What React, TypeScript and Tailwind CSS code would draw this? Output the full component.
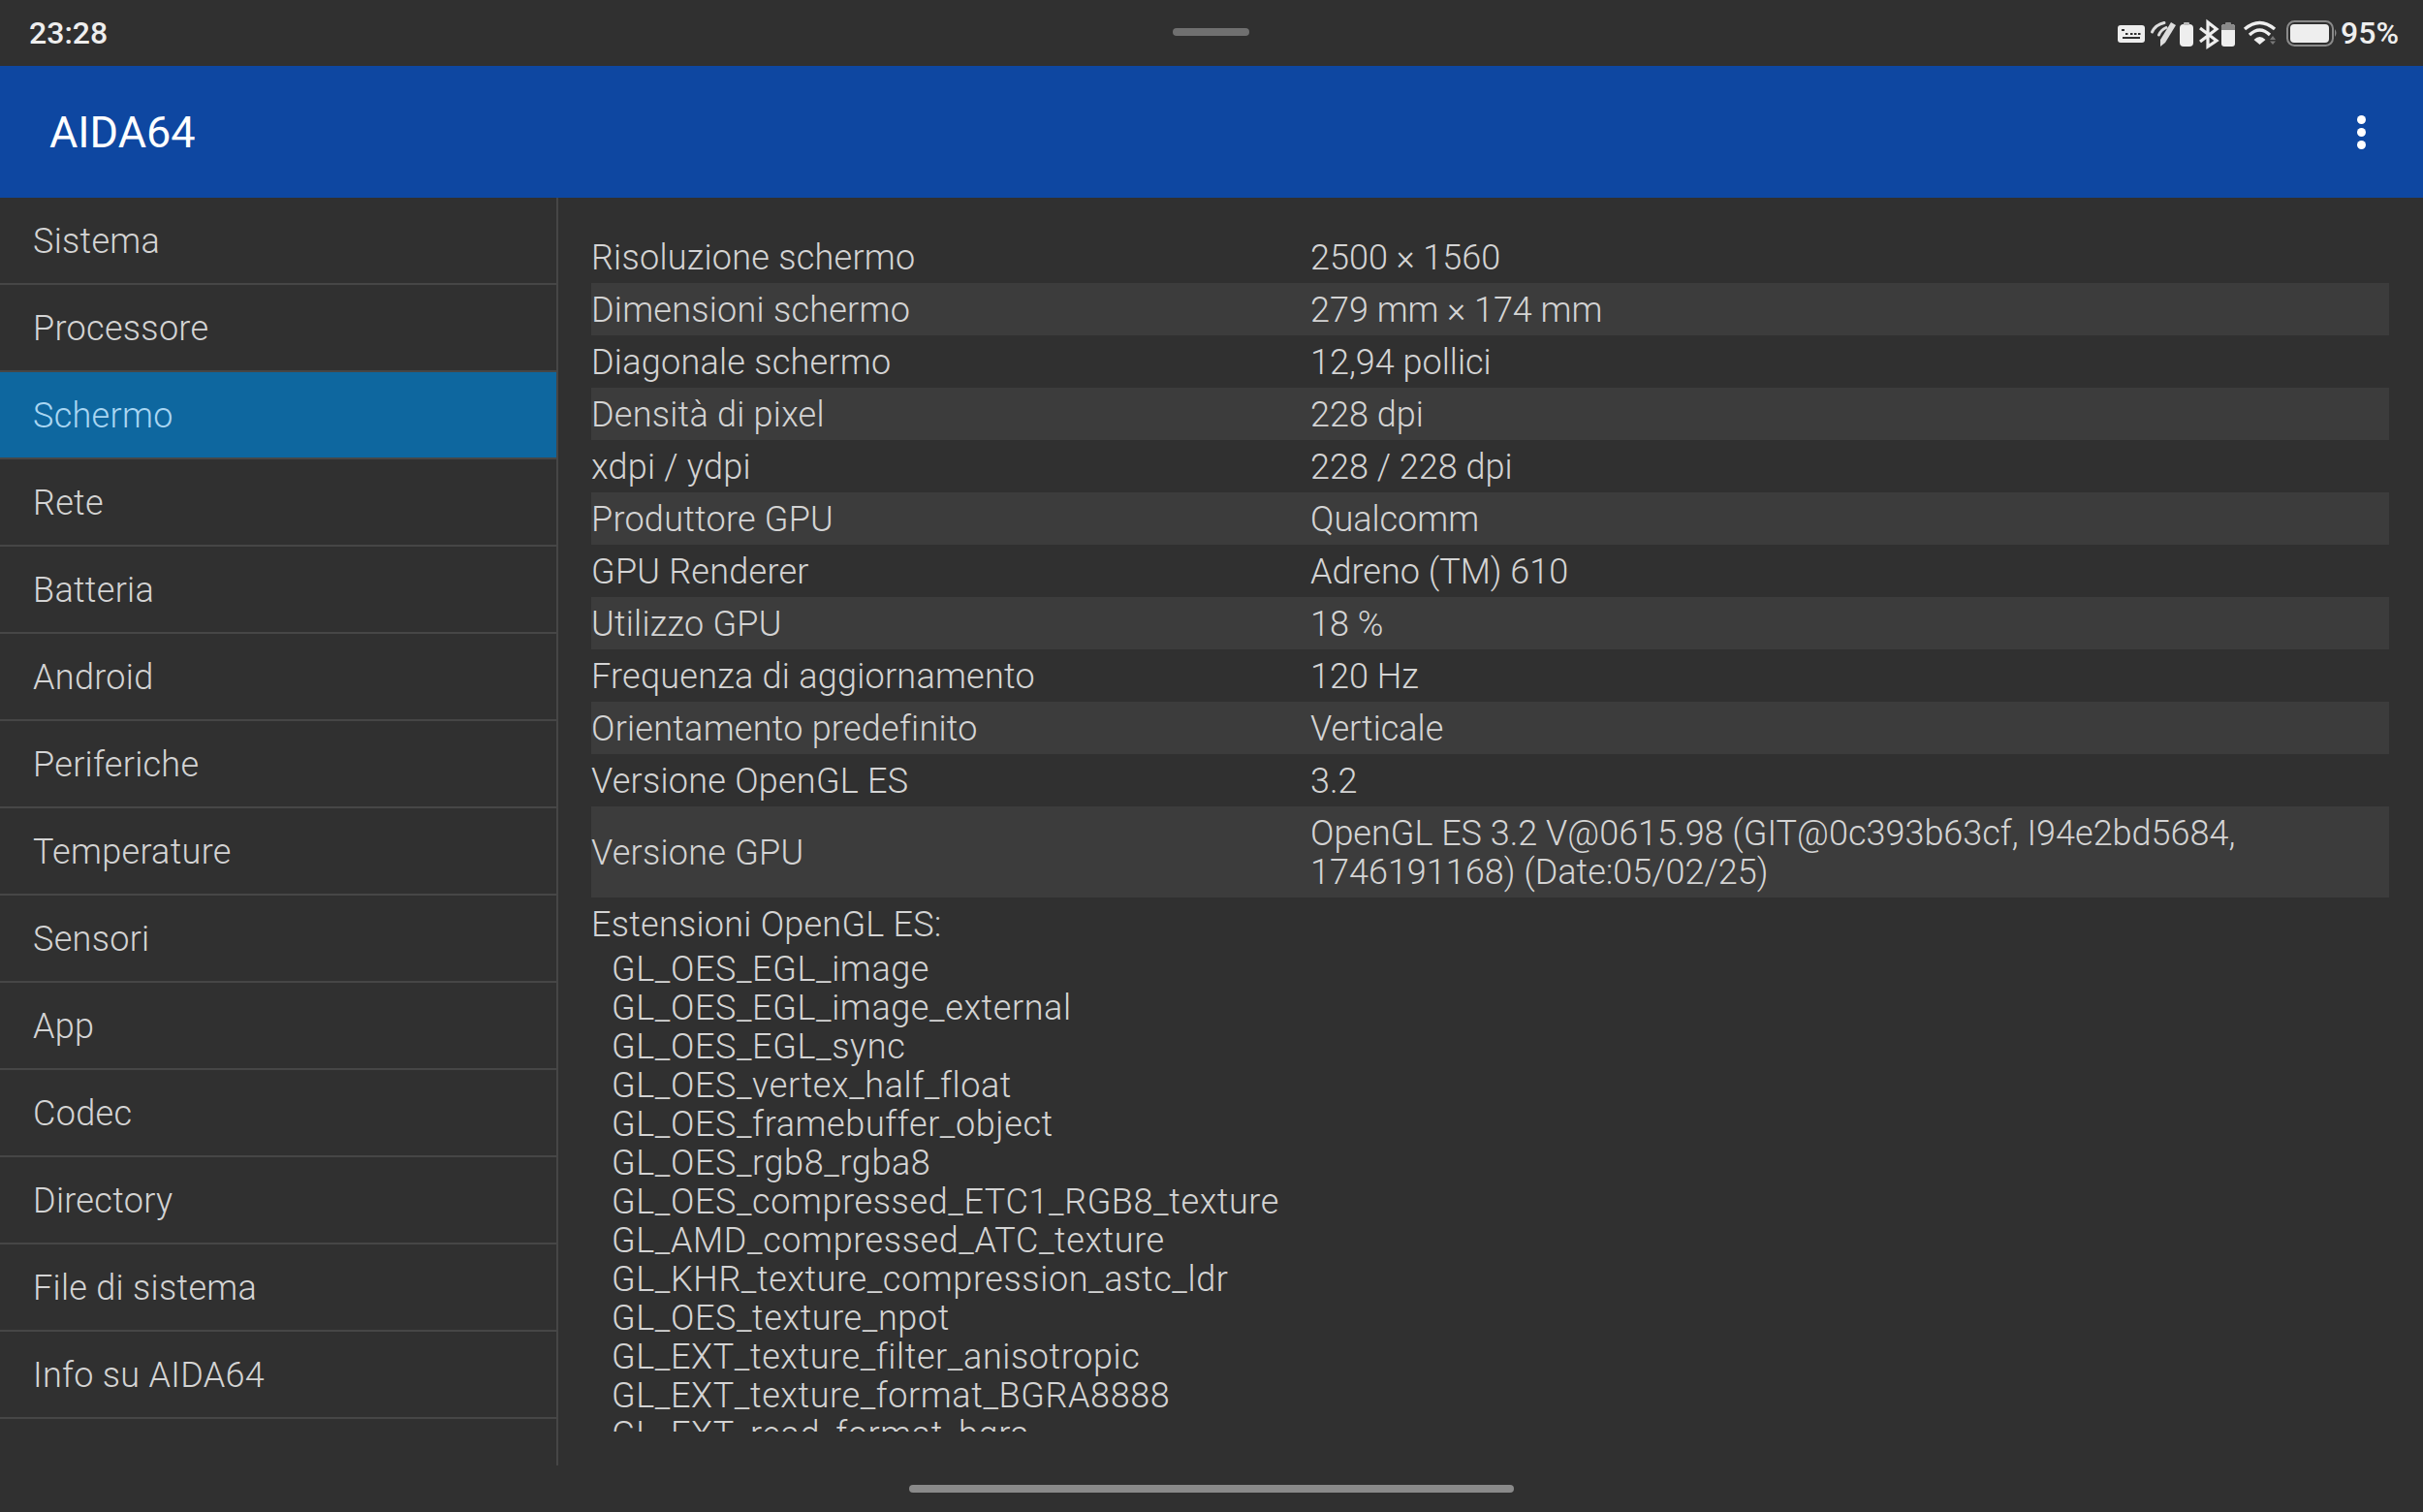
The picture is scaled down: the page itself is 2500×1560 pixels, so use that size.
const menu = [
  "Sistema", "Processore", "Schermo", "Rete", "Batteria", "Android", "Periferiche",
  "Temperature", "Sensori", "App", "Codec", "Directory", "File di sistema", "Info su AIDA64",
];

const rows = [
  ["Risoluzione schermo", "2500 × 1560"],
  ["Dimensioni schermo", "279 mm × 174 mm"],
  ["Diagonale schermo", "12,94 pollici"],
  ["Densità di pixel", "228 dpi"],
  ["xdpi / ydpi", "228 / 228 dpi"],
  ["Produttore GPU", "Qualcomm"],
  ["GPU Renderer", "Adreno (TM) 610"],
  ["Utilizzo GPU", "18 %"],
  ["Frequenza di aggiornamento", "120 Hz"],
  ["Orientamento predefinito", "Verticale"],
  ["Versione OpenGL ES", "3.2"],
  ["Versione GPU", "OpenGL ES 3.2 V@0615.98 (GIT@0c393b63cf, I94e2bd5684, 1746191168) (Date:05/02/25)"],
];

const extensions = [
  "GL_OES_EGL_image", "GL_OES_EGL_image_external", "GL_OES_EGL_sync", "GL_OES_vertex_half_float",
  "GL_OES_framebuffer_object", "GL_OES_rgb8_rgba8", "GL_OES_compressed_ETC1_RGB8_texture",
  "GL_AMD_compressed_ATC_texture", "GL_KHR_texture_compression_astc_ldr", "GL_OES_texture_npot",
  "GL_EXT_texture_filter_anisotropic", "GL_EXT_texture_format_BGRA8888", "GL_EXT_read_format_bgra",
  "GL_OES_texture_3D",
];

function StatusIcons() {
  return (
    <svg width="228" height="36" viewBox="0 0 228 36" fill="#eeeeee">
      {/* keyboard */}
      <rect x="1" y="10" width="28" height="18" rx="3" />
      <g fill="#303030">
        <rect x="5" y="14" width="3" height="2" />
        <rect x="9" y="18" width="2.5" height="2" />
        <rect x="14" y="18" width="2.5" height="2" />
        <rect x="18" y="18" width="2.5" height="2" />
        <rect x="22" y="18" width="2.5" height="2" />
        <rect x="6" y="22" width="18" height="2" />
      </g>
      {/* stylus */}
      <path d="M45 32 L45 25 L56 7 L61 10 L50 28 Z" fill="#dddddd" />
      <path d="M36.5 17 Q40 9.500 49 7.500 M43.500 20 Q45.500 15 51 12.500" stroke="#dddddd" strokeWidth="3" fill="none" strokeLinecap="round" />
      {/* small battery */}
      <rect x="65" y="9" width="14" height="23" rx="4" />
      <rect x="69" y="7" width="6" height="3" rx="1" fill="#bbbbbb" />
      {/* bluetooth */}
      <path d="M86 13 L103 26 L94 32 V7 L103 14 L86 27" stroke="#eeeeee" strokeWidth="3.2" fill="none" />
      {/* second battery */}
      <rect x="108" y="9" width="14" height="23" rx="3" />
      <path d="M108 15 V12 Q108 9 111 9 H119 Q122 9 122 12 V15 Z" fill="#8a8a8a" />
      <rect x="112" y="7" width="6" height="3" rx="1" fill="#8a8a8a" />
      {/* wifi */}
      <path d="M132 14 Q147.500 1 163 14 M137 20 Q147.500 10 158 20" stroke="#eeeeee" strokeWidth="3.4" fill="none" />
      <path d="M141.500 25 Q147.500 19 153.500 25 L147.500 30 Z" />
      <path d="M161 21 L164 25 H158 Z M161 30 L164 26.500 H158 Z" fill="#777777" />
      {/* main battery */}
      <rect x="176" y="6" width="47" height="25" rx="7.500" fill="none" stroke="#8a8a8a" strokeWidth="2" />
      <rect x="179" y="9" width="40" height="19" rx="4" />
      <path d="M225 14 Q228 18 225 22 Z" fill="#8a8a8a" />
    </svg>
  );
}

export default function App() {
  return (
    <div className="flex h-[1560px] w-[2500px] flex-col overflow-hidden bg-[#303030] font-['Roboto',sans-serif] text-[36px] font-light text-[#d4d4d4]">
      {/* status bar */}
      <div className="relative flex h-[68px] shrink-0 items-center justify-between pl-[30px] pr-[25px] text-[#eeeeee]">
        <span className="text-[32px] font-medium">23:28</span>
        <div className="absolute left-[1210px] top-[29px] h-[8px] w-[79px] rounded-full bg-[#707070]" />
        <div className="flex items-center gap-[3px]">
          <StatusIcons />
          <span className="text-[32px] font-medium">95%</span>
        </div>
      </div>

      {/* app bar */}
      <div className="flex h-[136px] shrink-0 items-center justify-between bg-[#0e47a1] pl-[51px] pr-[59px] text-white">
        <span className="pt-[2px] text-[45px] font-normal">AIDA64</span>
        <div className="flex flex-col gap-[4px]">
          <span className="size-[9px] rounded-full bg-white" />
          <span className="size-[9px] rounded-full bg-white" />
          <span className="size-[9px] rounded-full bg-white" />
        </div>
      </div>

      <div className="flex h-[1308px] shrink-0">
        <div className="w-[576px] shrink-0 border-r-2 border-[#464646] tracking-[0.3px]">
          {menu.map((item) => (
            <div
              key={item}
              className={
                item === "Schermo"
                  ? "flex h-[90px] items-center border-b-2 border-[#464646] bg-[#0e679f] pl-[34px] pt-[2px] text-[#a9d6f2]"
                  : "flex h-[90px] items-center border-b-2 border-[#464646] pl-[34px] pt-[2px]"
              }
            >
              {item}
            </div>
          ))}
        </div>

        <div className="min-w-0 flex-1 pb-[35px] pl-[34px] pr-[35px] pt-[34px]">
          <div className="h-full overflow-hidden leading-[40px]">
            {rows.map(([label, value], i) => (
              <div key={label} className={i % 2 === 1 ? "flex items-center bg-[#3c3c3c] pb-[6px] pt-[8px]" : "flex items-center pb-[6px] pt-[8px]"}>
                <div className="w-[742px] shrink-0 tracking-[0.25px]">{label}</div>
                <div className="min-w-0 flex-1">{value}</div>
              </div>
            ))}
            <div className="pb-[4px] pt-[8px] tracking-[0.25px]">Estensioni OpenGL ES:</div>
            <div className="pl-[21px] pt-[2px] tracking-[0.6px]">
              {extensions.map((ext) => (
                <div key={ext}>{ext}</div>
              ))}
            </div>
          </div>
        </div>
      </div>

      {/* gesture bar */}
      <div className="flex flex-1 justify-center pt-[20px]">
        <div className="h-[8px] w-[624px] rounded-full bg-[#8a8a8a]" />
      </div>
    </div>
  );
}
